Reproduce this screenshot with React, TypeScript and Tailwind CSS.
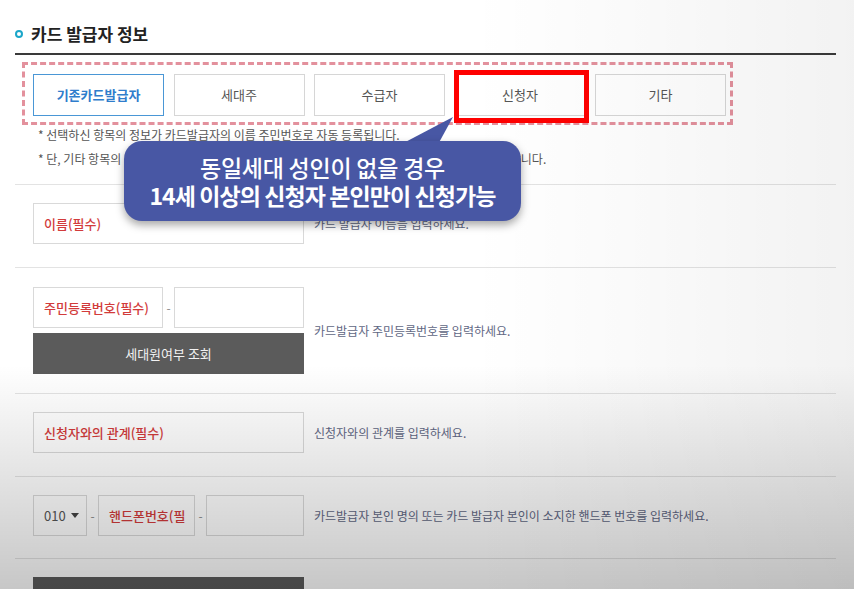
import React from "react";

const KR = "font-['Noto_Sans_CJK_KR','Noto_Sans',sans-serif]";

function Field({ text, w, red = true }: { text: string; w: string; red?: boolean }) {
  return (
    <div
      className={`${w} h-[41px] border border-[#d9d9d9] bg-white flex items-center pl-[10px] text-[13px] font-medium overflow-hidden whitespace-nowrap ${
        red ? "text-[#d23b3b]" : "text-[#555]"
      }`}
    >
      {text}
    </div>
  );
}

function Dash() {
  return <div className="w-[11px] text-center text-[12px] text-[#888]">-</div>;
}

function Help({ children }: { children: React.ReactNode }) {
  return <div className="ml-[10px] text-[12px] text-[#5f6784]">{children}</div>;
}

export default function App() {
  const tabs = ["기존카드발급자", "세대주", "수급자", "신청자", "기타"];
  return (
    <div className={`relative w-[854px] h-[589px] overflow-hidden bg-white ${KR}`}>
      <div className="pl-[15px] w-[836px]">
        {/* title */}
        <div className="mt-[23px] h-[22px] flex items-center gap-[8px]">
          <span className="w-[8px] h-[8px] rounded-full border-2 border-[#1ba6c9]" />
          <span className="text-[17px] leading-[22px] font-bold text-[#222]">카드 발급자 정보</span>
        </div>
        <div className="mt-[8px] h-[2px] bg-[#3a3a3a]" />

        {/* dashed selector box */}
        <div className="ml-[7px] mt-[7px] w-[711px] h-[63px] border-[3px] border-dashed border-[#e3919d] pl-[8px] pt-[9px] flex gap-[9.5px]">
          {tabs.map((t, i) => (
            <div key={t} className="relative">
              <div
                className={`w-[131px] h-[42px] flex items-center justify-center text-[13px] bg-white border ${
                  i === 0
                    ? "border-[#4a97d6] text-[#2f7dcc] font-bold"
                    : "border-[#d6d6d6] text-[#555]"
                }`}
              >
                {t}
              </div>
              {i === 3 && (
                <div className="absolute top-[-4px] bottom-[-1px] left-[-1px] right-[-3px] border-[5px] border-[#ff0000]" />
              )}
            </div>
          ))}
        </div>

        {/* notes */}
        <div className="pl-[23px] mt-[-2px] text-[12px] leading-[24px] text-[#555] whitespace-nowrap">
          <div>* 선택하신 항목의 정보가 카드발급자의 이름 주민번호로 자동 등록됩니다.</div>
          <div>* 단, 기타 항목의 경우에는 카드발급자의 이름과 주민등록번호를 반드시 모두 직접 입력하셔야만 합니다.</div>
        </div>
        <div className="mt-[13px] h-px bg-[#e3e3e3]" />

        {/* row 1 */}
        <div className="pl-[18px] pt-[18px] pb-[23px] flex items-center">
          <Field text="이름(필수)" w="w-[271px]" />
          <Help>카드 발급자 이름을 입력하세요.</Help>
        </div>
        <div className="h-px bg-[#e3e3e3]" />

        {/* row 2 */}
        <div className="pl-[18px] pt-[19px] pb-[19px] flex items-center">
          <div className="w-[271px] flex flex-col gap-[5px]">
            <div className="flex items-center">
              <Field text="주민등록번호(필수)" w="w-[130px]" />
              <Dash />
              <Field text="" w="w-[130px]" />
            </div>
            <div className="h-[41px] bg-[#5b5b5b] flex items-center justify-center text-[13px] text-[#f2f2f2]">
              세대원여부 조회
            </div>
          </div>
          <Help>카드발급자 주민등록번호를 입력하세요.</Help>
        </div>
        <div className="h-px bg-[#e3e3e3]" />

        {/* row 3 */}
        <div className="pl-[18px] pt-[18px] pb-[23px] flex items-center">
          <Field text="신청자와의 관계(필수)" w="w-[271px]" />
          <Help>신청자와의 관계를 입력하세요.</Help>
        </div>
        <div className="h-px bg-[#e3e3e3]" />

        {/* row 4 */}
        <div className="pl-[18px] pt-[18px] pb-[22px] flex items-center">
          <div className="w-[271px] flex items-center">
            <div className="w-[54px] h-[41px] border border-[#d9d9d9] bg-white flex items-center pl-[10px] gap-[5px] text-[13px] text-[#555]">
              <span>010</span>
              <svg width="8" height="5" viewBox="0 0 8 5">
                <path d="M0 0 L8 0 L4 5 Z" fill="#444" />
              </svg>
            </div>
            <Dash />
            <Field text="핸드폰번호(필" w="w-[97px]" />
            <Dash />
            <Field text="" w="w-[98px]" />
          </div>
          <Help>카드발급자 본인 명의 또는 카드 발급자 본인이 소지한 핸드폰 번호를 입력하세요.</Help>
        </div>
        <div className="h-px bg-[#e3e3e3]" />

        {/* row 5 */}
        <div className="pl-[18px] pt-[18px] flex items-center">
          <div className="w-[271px] h-[41px] bg-[#5b5b5b]" />
        </div>
      </div>

      {/* vignette */}
      <div className="pointer-events-none absolute inset-0 bg-linear-to-b from-transparent from-[62%] to-black/[0.22]" />
      <div className="pointer-events-none absolute inset-0 bg-linear-to-r from-transparent from-[55%] to-black/[0.05]" />

      {/* callout */}
      <svg className="absolute left-[380px] top-[114px]" width="80" height="34" viewBox="0 0 80 34">
        <path d="M14 34 L73 3 L56 34 Z" fill="#4857a4" />
      </svg>
      <div className="absolute left-[124px] top-[141px] w-[397px] h-[80px] rounded-[18px] bg-[#4857a4] shadow-[0_4px_8px_rgba(0,0,0,0.35)] flex flex-col items-center justify-center text-white">
        <div className="text-[23px] leading-[28px] font-medium tracking-[-0.01em]">동일세대 성인이 없을 경우</div>
        <div className="text-[23px] leading-[28px] font-bold tracking-[-0.04em]">14세 이상의 신청자 본인만이 신청가능</div>
      </div>
    </div>
  );
}
